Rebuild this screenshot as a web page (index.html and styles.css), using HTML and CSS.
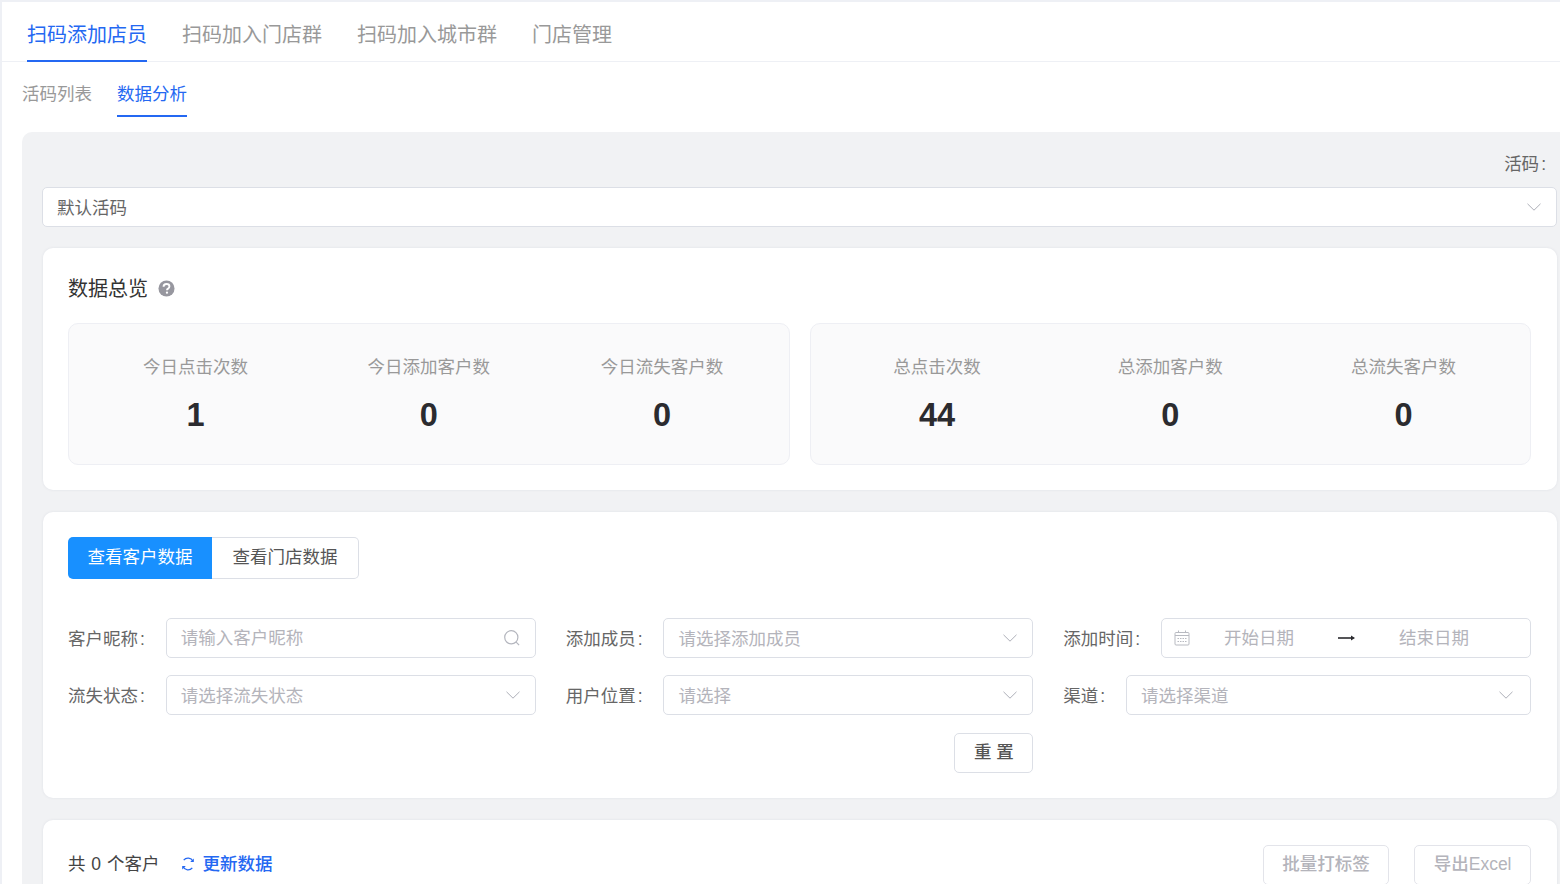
FILE: index.html
```html
<!DOCTYPE html>
<html lang="zh-CN">
<head>
<meta charset="utf-8">
<title>数据分析</title>
<link rel="stylesheet" href="styles.css">
</head>
<body>
<div class="page">
  <nav class="tabs">
    <a class="tab is-active">扫码添加店员</a>
    <a class="tab">扫码加入门店群</a>
    <a class="tab">扫码加入城市群</a>
    <a class="tab">门店管理</a>
  </nav>
  <nav class="subtabs">
    <a class="subtab">活码列表</a>
    <a class="subtab is-active">数据分析</a>
  </nav>
  <main class="panel">
    <div class="code-label">活码<span class="colon">:</span></div>
    <div class="field code-select">
      <span class="value">默认活码</span>
      <svg class="chevron" viewBox="0 0 14 8"><path d="M.5.8 7 7.2 13.5.8"/></svg>
    </div>

    <section class="card overview">
      <h2 class="title"><span class="title-text">数据总览</span>
        <svg class="help" viewBox="0 0 18 18"><circle cx="9" cy="9" r="8.5"/><path d="M5.900 7.100c0-1.800 1.300-2.800 3.100-2.800 1.800 0 3.100 1 3.100 2.500 0 1.100-.6 1.700-1.500 2.300-.8.500-1.100.9-1.100 1.700"/><circle class="dot" cx="9.500" cy="13.400" r="1.200"/></svg>
      </h2>
      <div class="stat-groups">
        <div class="stat-box">
          <div class="stat"><div class="stat-label">今日点击次数</div><div class="stat-value">1</div></div>
          <div class="stat"><div class="stat-label">今日添加客户数</div><div class="stat-value">0</div></div>
          <div class="stat"><div class="stat-label">今日流失客户数</div><div class="stat-value">0</div></div>
        </div>
        <div class="stat-box">
          <div class="stat"><div class="stat-label">总点击次数</div><div class="stat-value">44</div></div>
          <div class="stat"><div class="stat-label">总添加客户数</div><div class="stat-value">0</div></div>
          <div class="stat"><div class="stat-label">总流失客户数</div><div class="stat-value">0</div></div>
        </div>
      </div>
    </section>

    <section class="card filters">
      <div class="switch">
        <button class="switch-btn is-active">查看客户数据</button>
        <button class="switch-btn">查看门店数据</button>
      </div>
      <div class="filter-grid">
        <div class="filter">
          <label class="filter-label">客户昵称<span class="colon">:</span></label>
          <div class="field">
            <span class="placeholder raised">请输入客户昵称</span>
            <svg class="search" viewBox="0 0 16 16"><circle cx="7.300" cy="7.300" r="6.600"/><path d="m12.200 12.200 2.900 2.900"/></svg>
          </div>
        </div>
        <div class="filter">
          <label class="filter-label">添加成员<span class="colon">:</span></label>
          <div class="field">
            <span class="placeholder">请选择添加成员</span>
            <svg class="chevron" viewBox="0 0 14 8"><path d="M.5.8 7 7.2 13.5.8"/></svg>
          </div>
        </div>
        <div class="filter">
          <label class="filter-label">添加时间<span class="colon">:</span></label>
          <div class="field date">
            <svg class="calendar" viewBox="0 0 16 16"><rect x="1" y="2.500" width="14" height="12.500" rx="1"/><path d="M1 5.500h14M4.500 .5v2.500M11.500 .5v2.500"/><path class="ticks" d="M3.500 8.500h9M3.500 11.500h9"/></svg>
            <span class="date-part placeholder raised">开始日期</span>
            <svg class="arrow" viewBox="0 0 17 8"><path d="M0 4h15.500"/><path class="head" d="m13 1.500 4 2.500-4 2.500z"/></svg>
            <span class="date-part placeholder raised">结束日期</span>
          </div>
        </div>
        <div class="filter">
          <label class="filter-label">流失状态<span class="colon">:</span></label>
          <div class="field">
            <span class="placeholder">请选择流失状态</span>
            <svg class="chevron" viewBox="0 0 14 8"><path d="M.5.8 7 7.2 13.5.8"/></svg>
          </div>
        </div>
        <div class="filter">
          <label class="filter-label">用户位置<span class="colon">:</span></label>
          <div class="field">
            <span class="placeholder">请选择</span>
            <svg class="chevron" viewBox="0 0 14 8"><path d="M.5.8 7 7.2 13.5.8"/></svg>
          </div>
        </div>
        <div class="filter">
          <label class="filter-label">渠道<span class="colon">:</span></label>
          <div class="field channel">
            <span class="placeholder">请选择渠道</span>
            <svg class="chevron" viewBox="0 0 14 8"><path d="M.5.8 7 7.2 13.5.8"/></svg>
          </div>
        </div>
        <button class="reset">重 置</button>
      </div>
    </section>

    <section class="card results">
      <div class="results-head">
        <span class="count">共 0 个客户</span>
        <a class="refresh">
          <svg class="refresh-icon" viewBox="0 0 14 14"><path d="M12 4.200A5.600 5.600 0 0 0 2.700 3.200M2 9.800a5.600 5.600 0 0 0 9.300 1"/><path class="head" d="M12.800 1.500v3.600H9.200zM1.200 12.500V8.900h3.600z"/></svg>
          更新数据
        </a>
        <div class="actions">
          <button class="ghost">批量打标签</button>
          <button class="ghost">导出Excel</button>
        </div>
      </div>
    </section>
  </main>
</div>
</body>
</html>
```

FILE: styles.css
```css
* { box-sizing: border-box; }
html, body { margin: 0; height: 884px; overflow: hidden; }
body {
  background: #eef0f5;
  font-family: "Liberation Sans", "Noto Sans CJK SC", sans-serif;
  font-size: 17.5px;
  color: #666;
}
.page {
  margin: 2px 0 0 2px;
  background: #fff;
  height: 882px;
  overflow: hidden;
}
.tabs {
  display: flex;
  gap: 35px;
  padding-left: 25px;
  height: 60px;
  border-bottom: 1px solid #eef0f5;
}
.tab {
  height: 60px;
  line-height: 66px;
  font-size: 20px;
  color: #999;
  white-space: nowrap;
}
.tab.is-active { color: #2468f2; border-bottom: 2px solid #2468f2; }
.subtabs {
  display: flex;
  gap: 25px;
  padding: 0 0 0 20px;
  height: 70px;
}
.subtab {
  height: 55px;
  line-height: 64px;
  color: #999;
  white-space: nowrap;
}
.subtab.is-active { color: #2468f2; border-bottom: 2px solid #2468f2; }
.panel {
  margin-left: 20px;
  padding: 20px 3px 0 20px;
  background: #f1f2f4;
  border-radius: 10px 0 0 0;
  height: 800px;
}
.code-label {
  height: 35px;
  line-height: 25px;
  text-align: right;
  padding-right: 11px;
}
.colon { margin-left: 2px; }
.field {
  flex: 1;
  min-width: 0;
  height: 40px;
  display: flex;
  align-items: center;
  justify-content: space-between;
  padding: 0 14px;
  background: #fff;
  border: 1px solid #dcdfe6;
  border-radius: 5px;
}
.value { color: #666; padding-bottom: 2px; }
.placeholder { color: #b4b4bb; white-space: nowrap; padding-bottom: 2px; }
.placeholder.raised { padding-bottom: 4px; }
.chevron { width: 14px; height: 8px; fill: none; stroke: #adafb8; stroke-width: 1; flex: none; margin-right: 1px; }
.channel .chevron { margin-right: 3px; }
.search { width: 16px; height: 16px; fill: none; stroke: #b4b6be; stroke-width: 1.200; flex: none; margin-right: 1px; }
.card {
  background: #fff;
  border-radius: 10px;
  padding: 25px 26px 25px 25px;
  margin: 22px 0 0 1px;
  box-shadow: 0 0 3px rgba(30, 40, 80, .08);
}
.overview { margin-top: 21px; height: 242px; }
.title {
  margin: 0 0 20px;
  height: 30px;
  display: flex;
  align-items: center;
  gap: 10px;
  font-size: 20px;
  font-weight: 400;
  color: #333;
}
.title-text { padding-bottom: 2px; }
.help { width: 17px; height: 17px; }
.help circle { fill: #97979f; }
.help path { fill: none; stroke: #fff; stroke-width: 2; }
.help .dot { fill: #fff; }
.stat-groups { display: grid; grid-template-columns: 1fr 1fr; gap: 20px; }
.stat-box {
  height: 142px;
  padding: 0 10px;
  display: grid;
  grid-template-columns: repeat(3, 1fr);
  background: #fafafb;
  border: 1px solid #eeeff4;
  border-radius: 10px;
}
.stat { text-align: center; padding-top: 30px; }
.stat-label { height: 26px; line-height: 26px; color: #999; white-space: nowrap; }
.stat-value {
  margin-top: 12px;
  height: 46px;
  line-height: 46px;
  font-size: 32.500px;
  font-weight: 700;
  color: #2b2b2f;
}
.filters { height: 286px; }
.switch { display: flex; height: 42px; width: 291px; }
.switch-btn {
  flex: none;
  width: 147px;
  font: inherit;
  color: #555;
  background: #fff;
  border: 1px solid #dcdfe6;
  border-left: 0;
  border-radius: 0 5px 5px 0;
  padding: 0 0 5px;
}
.switch-btn.is-active {
  width: 144px;
  color: #fff;
  background: #1890ff;
  border: 0;
  border-radius: 5px 0 0 5px;
}
.filter-grid {
  margin-top: 39px;
  display: grid;
  grid-template-columns: repeat(3, 1fr);
  column-gap: 30px;
  row-gap: 17px;
}
.filter { display: flex; align-items: center; }
.filter-label { flex: none; padding: 0 20.900px 2px 0; color: #666; white-space: nowrap; }
.date { justify-content: flex-start; padding: 0 27px 0 12px; }
.calendar { width: 16px; height: 16px; flex: none; fill: none; stroke: #b8bac1; stroke-width: 1; }
.calendar .ticks { stroke-dasharray: 1.500 1; }
.date-part { flex: 1; text-align: center; }
.arrow { width: 17px; height: 8px; flex: none; margin: 0 10px; fill: none; stroke: #2b2b2f; stroke-width: 1.600; }
.arrow .head { fill: #2b2b2f; stroke: none; }
.reset {
  grid-column: 2;
  justify-self: end;
  margin-top: 1px;
  width: 79px;
  height: 40px;
  font: inherit;
  font-weight: 500;
  color: #555;
  background: #fff;
  border: 1px solid #dcdfe6;
  border-radius: 5px;
  padding: 0 0 5px;
}
.results { height: 120px; }
.results-head { display: flex; align-items: flex-start; }
.count { line-height: 38px; color: #444; white-space: nowrap; word-spacing: 1px; }
.refresh {
  display: flex;
  align-items: center;
  gap: 7px;
  margin-left: 22px;
  line-height: 38px;
  color: #2468f2;
  font-weight: 500;
  white-space: nowrap;
}
.refresh-icon { width: 14px; height: 14px; fill: none; stroke: #2468f2; stroke-width: 1.300; }
.refresh-icon .head { fill: #2468f2; stroke: none; }
.actions { margin-left: auto; display: flex; gap: 25px; }
.ghost {
  height: 40px;
  padding: 0 18.500px 6px;
  font: inherit;
  font-weight: 500;
  color: #b4b4bb;
  background: #fff;
  border: 1px solid #e3e4ea;
  border-radius: 5px;
  white-space: nowrap;
}
```
